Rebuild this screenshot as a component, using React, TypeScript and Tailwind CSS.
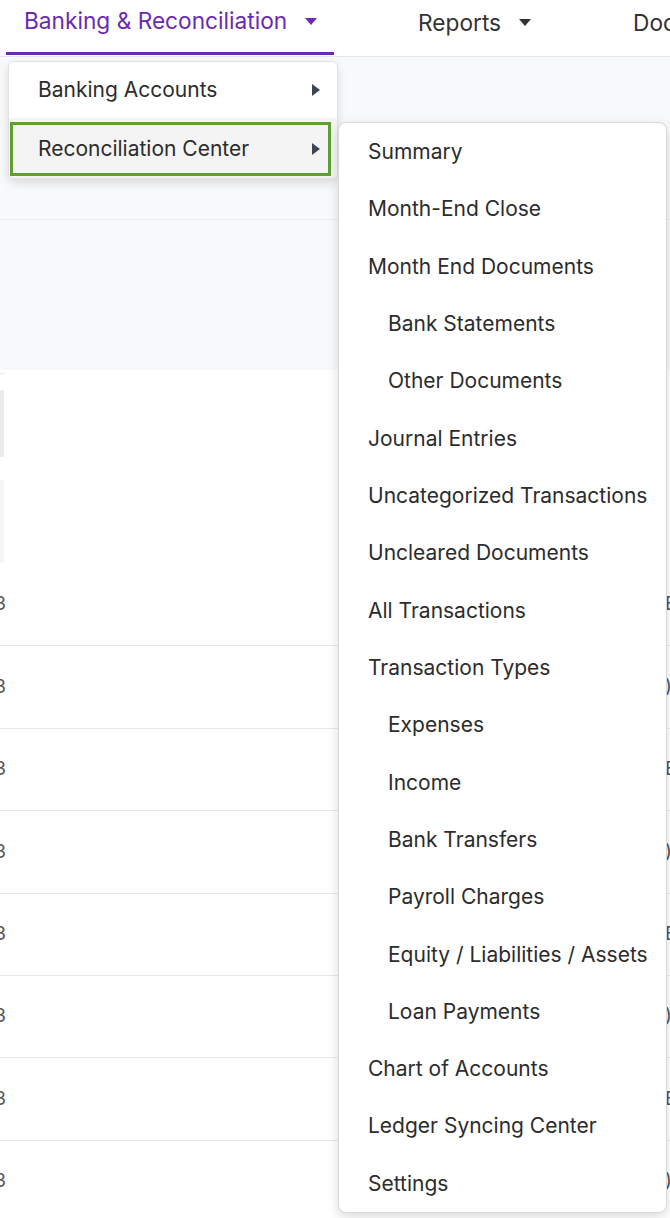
import React from "react";

const font = { fontFamily: "Inter, 'Noto Sans', sans-serif" };

const items: { label: string; sub?: boolean }[] = [
  { label: "Summary" },
  { label: "Month-End Close" },
  { label: "Month End Documents" },
  { label: "Bank Statements", sub: true },
  { label: "Other Documents", sub: true },
  { label: "Journal Entries" },
  { label: "Uncategorized Transactions" },
  { label: "Uncleared Documents" },
  { label: "All Transactions" },
  { label: "Transaction Types" },
  { label: "Expenses", sub: true },
  { label: "Income", sub: true },
  { label: "Bank Transfers", sub: true },
  { label: "Payroll Charges", sub: true },
  { label: "Equity / Liabilities / Assets", sub: true },
  { label: "Loan Payments", sub: true },
  { label: "Chart of Accounts" },
  { label: "Ledger Syncing Center" },
  { label: "Settings" },
];

function CaretDown({ className }: { className: string }) {
  return (
    <svg viewBox="0 0 12 7" className={className} fill="currentColor">
      <path d="M0 0h12L6 7z" />
    </svg>
  );
}

function CaretRight() {
  return (
    <svg viewBox="0 0 8 12" className="h-[12px] w-[8px] shrink-0 text-[#3b4553]" fill="currentColor">
      <path d="M0 0l8 6-8 6z" />
    </svg>
  );
}

/** Background table rows peeking out beside the menus. */
function Rows() {
  const rows = Array.from({ length: 8 }, (_, i) => i);
  return (
    <div className="flex flex-col bg-white">
      <div className="flex h-[194px] flex-col">
        <div className="mt-[3px] h-px w-[5px] bg-[#e8e8e8]" />
        <div className="mt-[16px] h-[67px] w-[4px] bg-[#ececec]" />
        <div className="mt-[23px] h-[83px] w-[4px] bg-[#f5f5f5]" />
      </div>
      {rows.map((i) => (
        <div key={i} className="flex h-[82.4px] items-center justify-between border-b border-[#e9e9e9]">
          <div className="flex w-[6px] justify-end overflow-hidden text-[19px] text-[#555]">
            <span>3</span>
          </div>
          <div className="w-[5px] overflow-hidden text-[19px] text-[#555]">
            <span>{i % 2 === 0 ? "E" : ")"}</span>
          </div>
        </div>
      ))}
    </div>
  );
}

export default function App() {
  return (
    <div className="relative h-[1218px] w-[670px] overflow-hidden bg-white" style={font}>
      <nav className="flex h-[57px] items-start overflow-hidden border-b border-[#e6e6e6] bg-white">
        <div className="ml-[6px] flex h-[55px] w-[328px] shrink-0 items-start border-b-[3px] border-[#6a2ab5] pl-[18px] pt-[5px]">
          <span className="whitespace-nowrap text-[22.7px] leading-[32px] text-[#6a2ab5]">Banking &amp; Reconciliation</span>
          <CaretDown className="ml-[18px] mt-[13px] h-[7px] w-[12px] shrink-0 text-[#6a2ab5]" />
        </div>
        <div className="ml-[84px] flex shrink-0 items-start pt-[7px]">
          <span className="whitespace-nowrap text-[22.7px] leading-[32px] text-[#333]">Reports</span>
          <CaretDown className="ml-[18px] mt-[12px] h-[7px] w-[12px] shrink-0 text-[#333]" />
        </div>
        <div className="ml-[102px] shrink-0 whitespace-nowrap pt-[7px] text-[22.7px] leading-[32px] text-[#333]">Documents</div>
      </nav>

      <div className="h-[313px] bg-[#f8f9fb]">
        <div className="h-[163px] border-b border-[#ebebeb]" />
      </div>

      <Rows />

      {/* first-level menu */}
      <div className="absolute left-[8px] top-[61px] w-[330px] overflow-hidden rounded-md border border-[#e2e2e2] bg-white shadow-[0_4px_10px_rgba(0,0,0,0.12)]">
        <div className="flex h-[56px] items-center justify-between pl-[29px] pr-[17px] text-[21px] text-[#2c2c2c]">
          <span>Banking Accounts</span>
          <CaretRight />
        </div>
        <div className="h-[60px] bg-[#f4f4f4] pb-[2px] pl-[1px] pr-[6px] pt-[4px]">
          <div className="flex h-full items-center justify-between border-[3px] border-[#60a033] pl-[25px] pr-[8px] text-[21px] text-[#2c2c2c]">
            <span>Reconciliation Center</span>
            <CaretRight />
          </div>
        </div>
      </div>

      {/* submenu */}
      <div className="absolute left-[338px] top-[122px] w-[329px] rounded-lg border border-[#d8d8d8] bg-white shadow-[0_4px_12px_rgba(0,0,0,0.14)]">
        {items.map((it) => (
          <div
            key={it.label}
            className={
              "flex h-[57.33px] items-center whitespace-nowrap text-[21px] text-[#2c2c2c] " +
              (it.sub ? "pl-[49px]" : "pl-[29px]")
            }
          >
            {it.label}
          </div>
        ))}
      </div>
    </div>
  );
}
